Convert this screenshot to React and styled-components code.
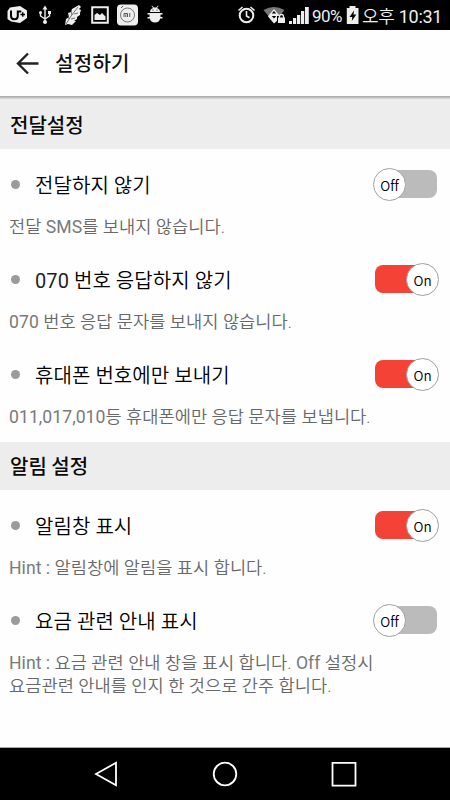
import React from "react";
import styled, { createGlobalStyle } from "styled-components";

const Global = createGlobalStyle`
  * { box-sizing: border-box; }
  html, body { margin: 0; background: #fff; }
  body { font-family: "Noto Sans CJK KR", "Noto Sans", sans-serif; }
`;

const Screen = styled.div`
  width: 450px;
  height: 800px;
  display: flex;
  flex-direction: column;
  background: #fefefe;
  overflow: hidden;
`;

const StatusBar = styled.div`
  height: 30px;
  flex: none;
  display: flex;
  justify-content: space-between;
  background: #000;
  color: #eee;
`;

const StatusIcons = styled.svg`
  display: block;
  width: ${(p) => p.$w}px;
  height: 30px;
  flex: none;
`;

const StatusInfo = styled.div`
  display: flex;
  width: 215px;
`;

const StatusText = styled.span`
  font-family: Roboto, "Noto Sans CJK KR", sans-serif;
  font-size: ${(p) => p.$size}px;
  line-height: ${(p) => p.$lh || 30}px;
  height: 30px;
  width: ${(p) => p.$w}px;
  letter-spacing: ${(p) => p.$ls || 0}px;
  white-space: nowrap;
  flex: none;
`;

const Korean = styled.span`
  font-family: "Noto Sans CJK KR", sans-serif;
  font-size: 18px;
  font-weight: 350;
  letter-spacing: -0.2px;
`;

const Header = styled.header`
  height: 66px;
  flex: none;
  display: flex;
  align-items: center;
  padding-left: 16px;
`;

const HeaderIcon = styled.svg`
  width: 24px;
  height: 24px;
  margin-right: 15px;
`;

const HeaderTitle = styled.h1`
  margin: 0;
  font-size: 20px;
  line-height: 30px;
  font-weight: 500;
  color: #111;
  letter-spacing: 0.3px;
`;

const HeaderShadow = styled.div`
  height: 5px;
  flex: none;
  background: linear-gradient(#b0b0b0 0 1px, #bebebe 1px 2px, #d8d8d8 2px 3px, #e9e9e9 3px 4px, #f2f2f2 4px 5px);
`;

const SectionTitle = styled.h2`
  margin: 0;
  height: 48px;
  flex: none;
  padding-left: 10px;
  background: #ededed;
  color: #0a0a0a;
  font-size: 20px;
  font-weight: 500;
  line-height: 47px;
`;

const Group = styled.section`
  flex: none;
  padding-bottom: ${(p) => p.$end || 0}px;
`;

const Setting = styled.div`
  min-height: 95px;
  padding: 18px 11px 0 9px;
`;

const SettingRow = styled.div`
  display: flex;
  align-items: center;
  height: 35px;
`;

const Bullet = styled.span`
  width: 9px;
  height: 9px;
  border-radius: 50%;
  background: #9b9b9b;
  margin: 0 15px 0 2px;
`;

const SettingTitle = styled.span`
  flex: 1;
  font-family: Roboto, "Noto Sans CJK KR", sans-serif;
  font-size: 20px;
  font-weight: 350;
  line-height: 30px;
  padding-top: 2px;
  color: #000;
  letter-spacing: 0.08px;
`;

const Description = styled.div`
  display: flex;
  flex-direction: column;
  margin-top: 14px;
`;

const DescriptionLine = styled.p`
  margin: 0;
  font-family: Roboto, "Noto Sans CJK KR", sans-serif;
  font-size: 17.6px;
  font-weight: 350;
  line-height: 23px;
  color: #686868;
  white-space: nowrap;
  letter-spacing: 0.05px;
`;

const Latin = styled.span`
  font-weight: 400;
  opacity: 0.88;
`;

const Switch = styled.span`
  display: flex;
  align-items: center;
  justify-content: ${(p) => (p.$on ? "flex-end" : "flex-start")};
  width: 62px;
  height: 28px;
  margin: 0 2px 1px 0;
  border-radius: ${(p) => (p.$on ? "8px 14px 14px 8px" : "14px 8px 8px 14px")};
  background: ${(p) => (p.$on ? "#f44336" : "#bbb")};
`;

const Knob = styled.span`
  flex: none;
  width: 33px;
  height: 33px;
  margin: 1px -2px 0;
  border: 1px solid #a0a0a0;
  border-radius: 50%;
  background: #fff;
  color: #000;
  font-family: "Noto Sans CJK KR", sans-serif;
  font-size: 13.5px;
  font-weight: 350;
  line-height: 32px;
  text-align: center;
  font-variant-ligatures: none;
`;

const Spacer = styled.div`
  flex: 1;
`;

const NavBar = styled.nav`
  height: 53px;
  flex: none;
  display: flex;
  justify-content: space-between;
  align-items: center;
  padding: 0 92px;
  border-top: 1px solid #aaa;
  background: #000;
`;

const NavIcon = styled.svg`
  width: 28px;
  height: 28px;
  fill: none;
  stroke: #fff;
  stroke-width: 1.8;
`;

function LeftIcons() {
  return (
    <StatusIcons $w={170} viewBox="0 0 170 30" fill="none">
      <path d="m10 7.500 10-1.500 7 4.500v7.500L20 23l-9-1.500L7.500 19v-8z" fill="#eee" />
      <path d="M11 10.500V16q0 3.200 3.500 3.200 3.300 0 3.300-3.200v-4.500h3.500" stroke="#000" strokeWidth="2" />
      <path d="M20.500 14.500H25M22.800 12.300v4.400" stroke="#000" strokeWidth="1.400" />
      <path d="M45 8v14M40.500 12.500V16L45 19l4.500-3v-3" stroke="#eee" strokeWidth="1.400" />
      <path d="m45 5.500 2.500 4h-5z" fill="#eee" />
      <circle cx="45" cy="22" r="2" fill="#eee" />
      <circle cx="40.500" cy="12.500" r="1.500" fill="#eee" />
      <path d="M48 11h3v3h-3z" fill="#eee" />
      <path d="m79 5-7 4-1 3-3 1 1 4-3 2-1 6 3-1 4 1 4-4h-2l3-2v-2l3-2v-2l1-3-2-1 2-2z" fill="#eee" />
      <path d="m66 24 5-8 7-9M69 19l-1-4M72 15l-1-4M71 19l4-1M74 14l4-1" stroke="#555" strokeWidth=".8" />
      <path d="M92.200 7.200h15.600v15.600H92.200z" stroke="#eee" strokeWidth="2" />
      <path d="M94.500 20v-5l2.500-2 3 2 2-2 3.500 3.500V20z" fill="#eee" />
      <rect x="117" y="4.500" width="21" height="21" rx="4" fill="#eee" />
      <circle cx="127.500" cy="15" r="7" stroke="#555" strokeWidth=".8" />
      <path d="m121 8 2-2" stroke="#555" />
      <path d="M124 17v-3.500h3.500V17M125.800 14.500V17M129.800 13v4" stroke="#444" strokeWidth=".9" />
      <path d="M150 12q0-3 3-4l-1.500-2 .5-.4 1.800 2q1.200-.3 2.400 0l1.800-2 .5.400L157 8q3 1 3 4z" fill="#eee" />
      <path d="M147.500 13h15v1.500h-2V17h2v1.500h-2.300q-.8 4-5.200 4t-5.200-4h-2.300V17h2v-2.500h-2z" fill="#eee" />
      <circle cx="153" cy="10" r=".6" fill="#000" />
      <circle cx="157" cy="10" r=".6" fill="#000" />
    </StatusIcons>
  );
}

function SignalIcons() {
  return (
    <StatusIcons $w={77} viewBox="0 0 77 30" fill="none">
      <circle cx="11.500" cy="15.500" r="6.800" stroke="#eee" strokeWidth="2" />
      <path d="M11.500 11v5l3 1.800M3.500 10.500l4-3.500M19.500 10.500 15.500 7" stroke="#eee" strokeWidth="1.600" />
      <path d="M28.500 10q10.500-6 21 0L39 23z" fill="#777" />
      <path d="m34 15 5-6 5 6-1 5-4 3.500-6-7z" fill="#eee" />
      <path d="m36.800 13.500 2.200-2.500 2.200 2.500zM36.800 16h4.400L39 18.500z" fill="#000" />
      <path d="M42 16h9v8h-9z" fill="#000" />
      <path d="M43 17.500h7V23h-7z" fill="#eee" />
      <path d="M44.500 18v-1.500q0-2 2-2t2 2V18" stroke="#eee" strokeWidth="1.300" />
      <path d="M54 21h3v3h-3zM58 18h3.200v6H58zM62 15h3.200v9H62zM66 11h3.200v13H66zM70 7h3.800v17H70z" fill="#eee" />
    </StatusIcons>
  );
}

function BatteryIcon() {
  return (
    <StatusIcons $w={16} viewBox="0 0 16 30">
      <path d="M3.500 6h6v2h3v16H.800V8h2.700z" fill="#eee" />
      <path d="m8 10.500-4.500 6.500h2.800l-.5 4 4.500-6.500H7.500z" fill="#000" />
    </StatusIcons>
  );
}

// Latin letters and digits are set in a heavier weight than the Hangul around them.
function MixedText({ children }) {
  return children
    .split(/([A-Za-z0-9,:]+)/)
    .map((part, i) => (i % 2 ? <Latin key={i}>{part}</Latin> : part));
}

function SettingItem({ title, description, on }) {
  return (
    <Setting>
      <SettingRow>
        <Bullet />
        <SettingTitle>
          <MixedText>{title}</MixedText>
        </SettingTitle>
        <Switch $on={on}>
          <Knob>{on ? "On" : "Off"}</Knob>
        </Switch>
      </SettingRow>
      <Description>
        {description.map((line) => (
          <DescriptionLine key={line}>
            <MixedText>{line}</MixedText>
          </DescriptionLine>
        ))}
      </Description>
    </Setting>
  );
}

export default function App() {
  return (
    <Screen>
      <Global />
      <StatusBar>
        <LeftIcons />
        <StatusInfo>
          <SignalIcons />
          <StatusText $size={17} $w={34} $ls={-0.6} $lh={32}>90%</StatusText>
          <BatteryIcon />
          <StatusText $size={18} $w={88} $ls={-0.35}>
            <Korean>오후</Korean> 10:31
          </StatusText>
        </StatusInfo>
      </StatusBar>
      <Header>
        <HeaderIcon viewBox="0 0 24 24" fill="none" stroke="#222" strokeWidth="2.400">
          <path d="M22.500 12.500H2.500M12 2.500 2 12.500l10 10" />
        </HeaderIcon>
        <HeaderTitle>설정하기</HeaderTitle>
      </Header>
      <HeaderShadow />
      <Group $end={8}>
        <SectionTitle>전달설정</SectionTitle>
        <SettingItem title="전달하지 않기" description={["전달 SMS를 보내지 않습니다."]} />
        <SettingItem title="070 번호 응답하지 않기" description={["070 번호 응답 문자를 보내지 않습니다."]} on />
        <SettingItem title="휴대폰 번호에만 보내기" description={["011,017,010등 휴대폰에만 응답 문자를 보냅니다."]} on />
      </Group>
      <Group>
        <SectionTitle>알림 설정</SectionTitle>
        <SettingItem title="알림창 표시" description={["Hint : 알림창에 알림을 표시 합니다."]} on />
        <SettingItem
          title="요금 관련 안내 표시"
          description={[
            "Hint : 요금 관련 안내 창을 표시 합니다. Off 설정시",
            "요금관련 안내를 인지 한 것으로 간주 합니다.",
          ]}
        />
      </Group>
      <Spacer />
      <NavBar>
        <NavIcon viewBox="0 0 28 28">
          <path d="M24 2.800v22.400L4 14z" />
        </NavIcon>
        <NavIcon viewBox="0 0 28 28">
          <circle cx="14" cy="14" r="11.300" />
        </NavIcon>
        <NavIcon viewBox="0 0 28 28">
          <path d="M2.500 2.800h23v22.800h-23z" />
        </NavIcon>
      </NavBar>
    </Screen>
  );
}
